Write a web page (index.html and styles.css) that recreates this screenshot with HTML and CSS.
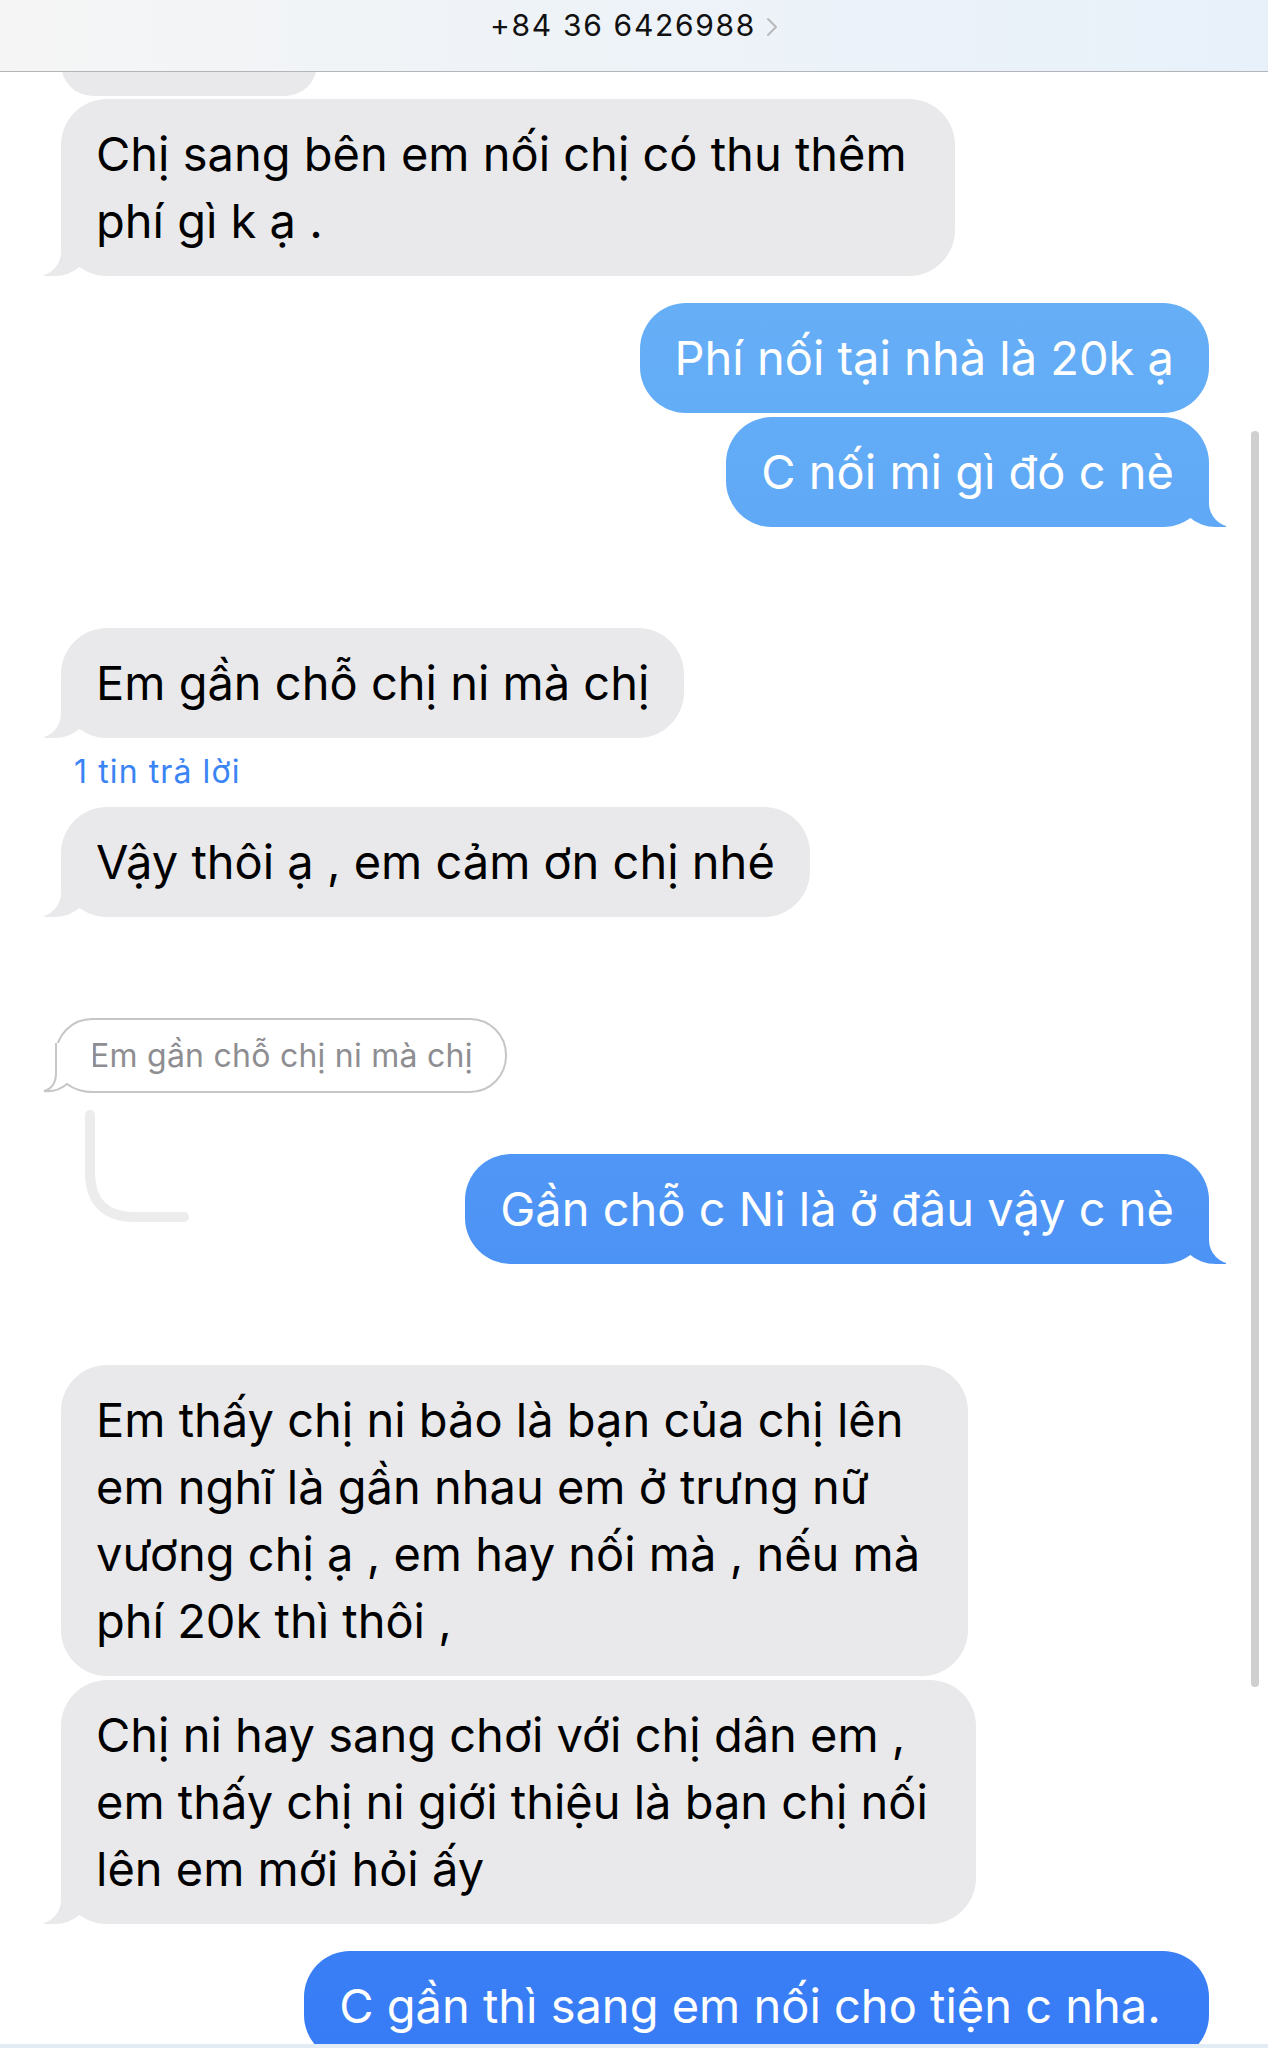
FILE: index.html
```html
<!DOCTYPE html>
<html lang="vi">

<head>
    <meta charset="UTF-8">
    <meta name="viewport" content="width=device-width, initial-scale=1.0">
    <title>+84 36 6426988</title>
    <link rel="stylesheet" href="styles.css">
</head>

<body>
    <header class="topbar">
        <span class="contact">+84 36 6426988</span>
        <svg class="chevron" width="12" height="20" viewBox="0 0 12 20">
            <path d="M2 2 L10 10 L2 18" fill="none" stroke="#b9b9bb" stroke-width="2" stroke-linecap="round" stroke-linejoin="round" />
        </svg>
    </header>

    <main class="thread">
        <div class="msg them peek"></div>
        <div class="msg them tail gap-xs">Chị sang bên em nối chị có thu thêm&nbsp;<br>phí gì k ạ .</div>

        <div class="msg me gap-m">Phí nối tại nhà là 20k ạ</div>
        <div class="msg me tail gap-s">C nối mi gì đó c nè</div>

        <div class="msg them tail gap-l">Em gần chỗ chị ni mà chị</div>
        <div class="reply-count">1 tin trả lời</div>
        <div class="msg them tail gap-count">Vậy thôi ạ , em cảm ơn chị nhé</div>

        <!-- reply thread -->
        <div class="quote gap-l">
            Em gần chỗ chị ni mà chị
            <svg class="quote-tail" width="50" height="50" viewBox="0 0 50 50">
                <path d="M13 0 V30 C13 40 8 46 1 48 C9 49 18 46 24 41 C32 47 40 49 50 49 L50 0 Z" fill="#fff" />
                <path d="M13 0 V30 C13 40 8 46 1 48 C9 49 18 46 24 41 C32 47 40 49 50 49" fill="none" stroke="#c6c6c8" stroke-width="2" />
            </svg>
        </div>
        <div class="reply-row">
            <svg class="connector" width="115" height="120" viewBox="0 0 115 120">
                <path d="M10 10 V67 Q10 112 55 112 H104" fill="none" stroke="#ececec" stroke-width="10" stroke-linecap="round" />
            </svg>
            <div class="msg me tail">Gần chỗ c Ni là ở đâu vậy c nè</div>
        </div>

        <div class="msg them gap-l">Em thấy chị ni bảo là bạn của chị lên&nbsp;<br>em nghĩ là gần nhau em ở trưng nữ&nbsp;<br>vương chị ạ , em hay nối mà , nếu mà&nbsp;<br>phí 20k thì thôi ,</div>
        <div class="msg them tail gap-s">Chị ni hay sang chơi với chị dân em ,&nbsp;<br>em thấy chị ni giới thiệu là bạn chị nối&nbsp;<br>lên em mới hỏi ấy</div>

        <div class="msg me gap-m">C gần thì sang em nối cho tiện c nha.&nbsp;</div>
    </main>

    <div class="scroll-indicator"></div>
    <div class="input-edge"></div>
</body>

</html>
```

FILE: styles.css
```css
* {
    box-sizing: border-box;
    margin: 0;
    padding: 0;
}

body {
    font-family: 'Inter', 'Liberation Sans', sans-serif;
    background-color: #fff;
    height: 2048px;
    overflow: hidden;
}

.topbar {
    position: sticky;
    top: 0;
    z-index: 2;
    height: 72px;
    padding-top: 7px;
    display: flex;
    justify-content: center;
    align-items: flex-start;
    gap: 10px;
    background: linear-gradient(90deg, #f5f5f5 0%, #eef3f8 45%, #e8f1fa 100%);
    border-bottom: 1px solid #b3b5b8;
}

.contact {
    font-size: 30px;
    line-height: 36px;
    letter-spacing: 1.7px;
    color: #111;
}

.chevron {
    margin-top: 10px;
}

.thread {
    display: flex;
    flex-direction: column;
    padding: 0 59px 0 61px;
}

.msg {
    position: relative;
    font-size: 47px;
    line-height: 67px;
    padding: 21px 35px 22px;
    border-radius: 46px;
    white-space: nowrap;
}

.msg.them {
    align-self: flex-start;
    background-color: #e9e9eb;
    color: #000;
}

.msg.me {
    align-self: flex-end;
    background: linear-gradient(#6eb8f7, #377cf5) fixed;
    color: #fff;
}

.peek {
    width: 256px;
    height: 64px;
    margin-top: -40px;
    padding: 0;
}

/* bubble tails */
.msg.tail::before,
.msg.tail::after {
    content: "";
    position: absolute;
    bottom: 0;
    height: 48px;
}

.msg.them.tail::before {
    left: -17px;
    width: 48px;
    background-color: #e9e9eb;
    border-bottom-right-radius: 38px 34px;
}

.msg.them.tail::after {
    left: -30px;
    width: 30px;
    background-color: #fff;
    border-bottom-right-radius: 24px;
}

.msg.me.tail::before {
    right: -17px;
    width: 48px;
    background: linear-gradient(#6eb8f7, #377cf5) fixed;
    border-bottom-left-radius: 38px 34px;
}

.msg.me.tail::after {
    right: -30px;
    width: 30px;
    background-color: #fff;
    border-bottom-left-radius: 24px;
}

.gap-xs {
    margin-top: 3px;
}

.gap-s {
    margin-top: 4px;
}

.gap-m {
    margin-top: 27px;
}

.gap-l {
    margin-top: 101px;
}

.gap-count {
    margin-top: 15px;
}

.reply-count {
    margin-top: 14px;
    margin-left: 13px;
    font-size: 32px;
    line-height: 40px;
    letter-spacing: 1.1px;
    color: #3a84f5;
}

.quote {
    position: relative;
    align-self: flex-start;
    margin-left: -6px;
    padding: 14px 32px 13px 33px;
    font-size: 32px;
    line-height: 44px;
    letter-spacing: 0.25px;
    color: #8e8e92;
    border: 2px solid #c6c6c8;
    border-radius: 37px;
    white-space: nowrap;
}

.quote-tail {
    position: absolute;
    left: -14px;
    bottom: -2px;
}

.reply-row {
    display: flex;
    align-items: flex-start;
}

.connector {
    margin-top: 12px;
    margin-left: 19px;
}

.reply-row .msg {
    margin-left: auto;
    margin-top: 61px;
}

.scroll-indicator {
    position: fixed;
    top: 431px;
    right: 9px;
    width: 8px;
    height: 1256px;
    border-radius: 4px;
    background-color: #cfcfcf;
}

.input-edge {
    position: fixed;
    left: 0;
    right: 0;
    bottom: 0;
    height: 4px;
    background-color: #e3ecf4;
}
```
